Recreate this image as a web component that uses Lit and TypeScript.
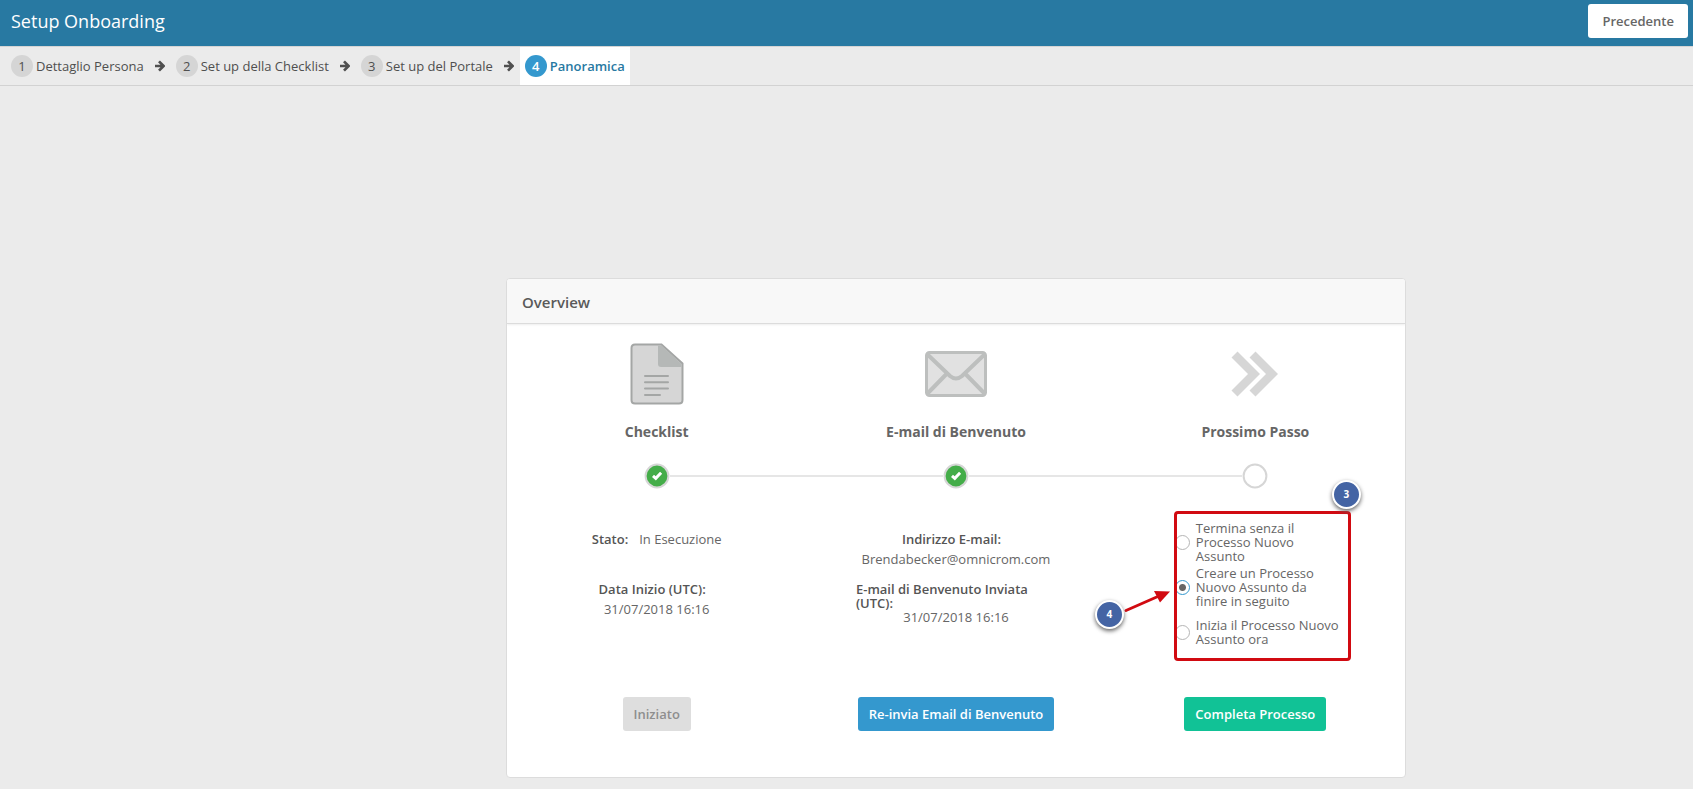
import { LitElement, html, css, svg } from "lit";
import { customElement, property, state } from "lit/decorators.js";
import { classMap } from "lit/directives/class-map.js";

const checkIcon = svg`<path d="M9 12.800l2.800 2.500 5.300-5.500" fill="none" stroke="#fff" stroke-width="3"/>`;

@customElement("step-bar")
class StepBar extends LitElement {
  @property({ attribute: false }) steps: string[] = [];
  @property({ type: Number }) current = 0;

  static styles = css`
    :host { display: block; }
    ol {
      display: flex; align-items: stretch; margin: 0; padding: 0 6px; list-style: none;
      height: 38px; border-top: 1px solid #d4d4d4; border-bottom: 1px solid #d2d2d2;
    }
    li { display: flex; align-items: center; }
    a {
      display: flex; align-items: center; gap: 3px; height: 100%; padding: 0 5px;
      color: #4f4f4f; text-decoration: none; font-size: 13px; line-height: 18px; white-space: nowrap;
    }
    .num {
      width: 22px; height: 22px; border-radius: 11px; background: #d5d5d5;
      text-align: center; line-height: 22px;
    }
    .active { background: #fff; color: #2879a2; font-weight: 600; }
    .active .num { background: #3498ce; color: #fff; }
    .arrow { display: block; margin: 0 6px; }
  `;

  render() {
    return html`<ol>
      ${this.steps.map((label, i) => html`<li>
        <a href="#" class=${classMap({ active: i === this.current })}>
          <span class="num">${i + 1}</span><span>${label}</span>
        </a>
        ${i < this.steps.length - 1
          ? html`<svg class="arrow" width="10" height="12" viewBox="0 0 10 12" aria-hidden="true">
              <path d="M0 6h8.500M4 1.400L8.600 6 4 10.600" fill="none" stroke="#4f4f4f" stroke-width="2.700"/>
            </svg>`
          : ""}
      </li>`)}
    </ol>`;
  }
}

@customElement("app-root")
class AppRoot extends LitElement {
  @state() private choice = 1;

  private options = [
    "Termina senza il Processo Nuovo Assunto",
    "Creare un Processo Nuovo Assunto da finire in seguito",
    "Inizia il Processo Nuovo Assunto ora",
  ];

  static styles = css`
    :host {
      display: block; min-height: 100vh; background: #ebebeb; color: #666;
      font: 13px/14px "Open Sans", "Noto Sans", sans-serif;
    }
    * { box-sizing: border-box; }
    .topbar {
      display: flex; align-items: center; justify-content: space-between;
      height: 46px; padding: 0 5px 4px 11px; background: #2879a2;
    }
    h1 { margin: 0; color: #fff; font-size: 18px; line-height: 24px; font-weight: 400; }
    button {
      height: 34px; padding: 0 11px; border: 0; border-radius: 3px;
      font: 600 13px/18px "Open Sans", "Noto Sans", sans-serif; color: #fff;
    }
    .prev { padding: 0 14px; background: #fff; color: #666; }
    main { display: flex; justify-content: center; padding: 192px 0 11px 219px; }
    .card {
      width: 900px; border: 1px solid #dcdcdc; border-radius: 4px; background: #fff; overflow: hidden;
    }
    h2 {
      margin: 0; height: 45px; padding: 0 15px; line-height: 46px; font-size: 15px; font-weight: 600;
      color: #5a5a5a; background: #f8f8f8; border-bottom: 1px solid #dcdcdc; box-shadow: 0 1px 2px #eee;
    }
    .columns { display: grid; grid-template-columns: repeat(3, 1fr); padding-bottom: 46px; }
    .column { display: flex; flex-direction: column; align-items: center; }
    .icon { display: block; width: 64px; height: 64px; margin-top: 18px; }
    h3 { margin: 16px 0 0; font-size: 14px; line-height: 20px; font-weight: 700; }
    .track {
      display: grid; grid-template-columns: 1fr 26px 1fr; align-items: center;
      width: 100%; height: 26px; margin-top: 21px;
    }
    .line { height: 2px; background: #e6e6e6; }
    .line.none { background: none; }
    .dot { display: block; width: 26px; height: 26px; }
    .details { width: 200px; height: 183px; margin-top: 25px; padding-top: 18px; }
    dl { margin: 0; display: flex; flex-direction: column; align-items: center; }
    dl.inline { flex-direction: row; justify-content: center; gap: 2px; height: 50px; align-items: flex-start; }
    dl.block { height: 50px; gap: 6px; }
    dl.tight { gap: 0; }
    dt { padding-right: 9px; font-weight: 600; color: #555; }
    dd { margin: 0; }
    .started { background: #dedede; color: #8e8e8e; }
    .resend { background: #3498ce; }
    .finish { background: #11c296; }
    .choice-area { height: 186px; margin: 22px 0 0 14px; }
    .choices { position: relative; width: 177px; height: 150px; padding: 9px 3px 0 3px; }
    .choices::after {
      content: ""; position: absolute; inset: 0; border: 3px solid #d10a11; border-radius: 4px;
      pointer-events: none;
    }
    label { display: flex; align-items: center; gap: 6px; height: 45px; cursor: pointer; }
    label span { width: 144px; padding-bottom: 2px; }
    input {
      appearance: none; flex: none; width: 15px; height: 15px; margin: 0 0 0 -2px;
      border: 1px solid #b5b5b5; border-radius: 8px; background: #fff;
    }
    input:checked { border-color: #3498ce; background: radial-gradient(#666 3px, #fff 4px); }
    .badge {
      position: absolute; z-index: 1; width: 29px; height: 29px; border: 2px solid #fff; border-radius: 15px;
      background: #4464a4; color: #fff; font-weight: 700; font-size: 10px; line-height: 25px; text-align: center;
      box-shadow: 0 2px 4px #666;
    }
    .three { right: -10px; top: -31px; }
    .four { left: -79px; top: 89px; }
    .pointer { position: absolute; left: -52px; top: 76px; }
  `;

  private dot(done: boolean) {
    return html`<svg class="dot" viewBox="0 0 26 26" aria-hidden="true">
      <circle cx="13" cy="13" r="11.400" fill=${done ? "#44ad49" : "#fff"} stroke="#d6d6d6" stroke-width="2"/>
      ${done ? checkIcon : ""}
    </svg>`;
  }

  render() {
    return html`
      <header class="topbar">
        <h1>Setup Onboarding</h1>
        <button class="prev">Precedente</button>
      </header>
      <step-bar .current=${3} .steps=${["Dettaglio Persona", "Set up della Checklist", "Set up del Portale", "Panoramica"]}></step-bar>
      <main>
        <section class="card">
          <h2>Overview</h2>
          <div class="columns">
            <div class="column">
              <svg class="icon" viewBox="0 0 64 64" aria-hidden="true">
                <path d="M10 2.500h26.500L57.500 21.500V58q0 3.500-3.500 3.500H10Q6.500 61.500 6.500 58V6q0-3.500 3.500-3.500z" fill="#d6d6d6" stroke="#a4a6a5" stroke-width="2"/>
                <path d="M33 3.500h3.500L56.500 22V25H36q-3 0-3-3z" fill="#b5b8b7"/>
                <path d="M20 34h23M20 40.300h23M20 46.600h23M20 53h15" stroke="#a4a6a5" stroke-width="2" stroke-linecap="round"/>
              </svg>
              <h3>Checklist</h3>
              <div class="track"><i class="line none"></i>${this.dot(true)}<i class="line"></i></div>
              <div class="details">
                <dl class="inline"><dt>Stato:</dt><dd>In Esecuzione</dd></dl>
                <dl class="block"><dt>Data Inizio (UTC):</dt><dd>31/07/2018 16:16</dd></dl>
              </div>
              <button class="started">Iniziato</button>
            </div>
            <div class="column">
              <svg class="icon" viewBox="0 0 64 64" aria-hidden="true">
                <rect x="2.500" y="10.500" width="59" height="43" rx="3" fill="#e1e1e1" stroke="#bdbfbe" stroke-width="3"/>
                <path d="M3 12L26 34q6 5 12 0L61 12M3 52L23 31.500M61 52L41 31.500" fill="none" stroke="#bdbfbe" stroke-width="4"/>
              </svg>
              <h3>E-mail di Benvenuto</h3>
              <div class="track"><i class="line"></i>${this.dot(true)}<i class="line"></i></div>
              <div class="details">
                <dl class="block"><dt>Indirizzo E-mail:</dt><dd>Brendabecker@omnicrom.com</dd></dl>
                <dl class="block tight"><dt>E-mail di Benvenuto Inviata (UTC):</dt><dd>31/07/2018 16:16</dd></dl>
              </div>
              <button class="resend">Re-invia Email di Benvenuto</button>
            </div>
            <div class="column">
              <svg class="icon" viewBox="0 0 64 64" aria-hidden="true">
                <path d="M14.500 9.500L37 32 14.500 54.500l-6-6L25 32 8.500 15.500zM32.500 9.500L55 32 32.500 54.500l-6-6L43 32 26.500 15.500z" fill="#d6d6d6"/>
              </svg>
              <h3>Prossimo Passo</h3>
              <div class="track"><i class="line"></i>${this.dot(false)}<i class="line none"></i></div>
              <div class="choice-area">
                <div class="choices" role="radiogroup" aria-label="Prossimo Passo">
                  ${this.options.map((text, i) => html`<label>
                    <input type="radio" name="next" .checked=${this.choice === i} @change=${() => (this.choice = i)}>
                    <span>${text}</span>
                  </label>`)}
                  <span class="badge three">3</span>
                  <span class="badge four">4</span>
                  <svg class="pointer" width="50" height="28" viewBox="0 0 50 28" aria-hidden="true">
                    <path d="M4 23.500L37 9" stroke="#d10a11" stroke-width="3" stroke-linecap="round"/>
                    <path d="M32 4L48 4.500 38 15.500z" fill="#d10a11"/>
                  </svg>
                </div>
              </div>
              <button class="finish">Completa Processo</button>
            </div>
          </div>
        </section>
      </main>
    `;
  }
}
